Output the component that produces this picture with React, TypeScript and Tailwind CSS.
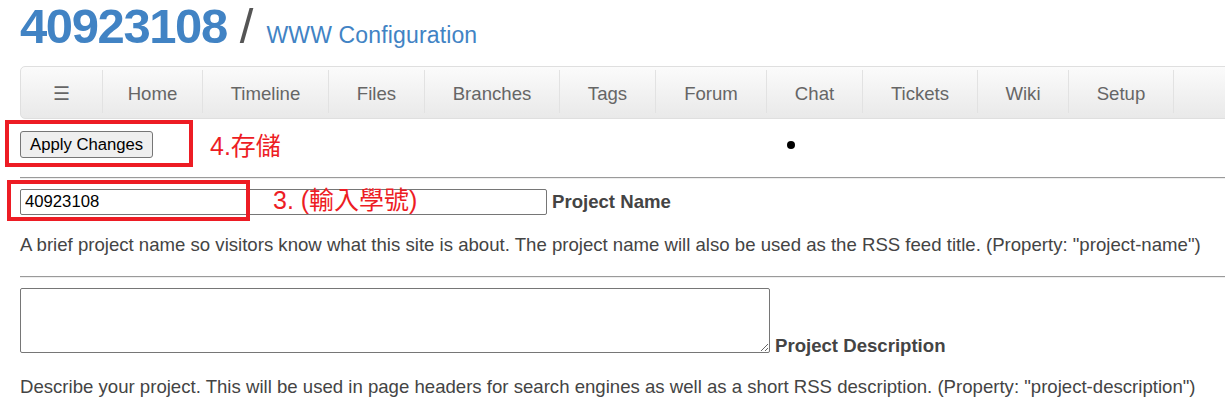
import React from "react";

const menu = [
  { label: "☰", w: "w-[82px]" },
  { label: "Home", w: "w-[100px]" },
  { label: "Timeline", w: "w-[126px]" },
  { label: "Files", w: "w-[96px]" },
  { label: "Branches", w: "w-[135px]" },
  { label: "Tags", w: "w-[96px]" },
  { label: "Forum", w: "w-[111px]" },
  { label: "Chat", w: "w-[96px]" },
  { label: "Tickets", w: "w-[115px]" },
  { label: "Wiki", w: "w-[91px]" },
  { label: "Setup", w: "w-[105px]" },
];

export default function App() {
  return (
    <div className="relative h-[413px] w-[1225px] overflow-hidden bg-white font-['Liberation_Sans',Arial,sans-serif] text-[#444]">
      <div className="flex w-[1280px] flex-col pl-[20px]">
        {/* title */}
        <div className="h-[66px] pt-[2px]">
          <h1 className="flex items-baseline leading-[49px]">
            <span className="text-[49px] font-bold tracking-[-1.4px] text-[#4183c4]">40923108</span>
            <span className="ml-[13px] text-[49px] text-[#555]">/</span>
            <span className="ml-[13px] text-[23px] tracking-[0.15px] text-[#4183c4]">WWW Configuration</span>
          </h1>
        </div>

        {/* main menu */}
        <nav className="flex h-[53px] rounded-l-[5px] border border-[#dfdfdf] bg-[linear-gradient(#fbfbfb,#e9e9e9)]">
          {menu.map((m) => (
            <a
              key={m.label}
              className={`${m.w} mt-[3px] mb-[5px] flex items-center justify-center border-r border-[#e2e2e2] pt-[4px] text-[18.6px] text-[#666]`}
            >
              {m.label}
            </a>
          ))}
        </nav>

        {/* apply */}
        <div className="mt-[12px] flex h-[27px]">
          <button className="h-[27px] rounded-[3px] border border-[#767676] bg-[#efefef] px-[9px] text-[16.7px] text-black">
            Apply Changes
          </button>
        </div>

        <hr className="mt-[19px] h-0 border-t border-b border-t-[#9a9a9a] border-b-[#eee]" />

        {/* project name */}
        <div className="mt-[10px] flex h-[26px] items-center gap-[5px]">
          <input
            readOnly
            value="40923108"
            className="h-[26px] w-[527px] rounded-[2px] border border-[#767676] px-[4px] text-[16.7px] text-black"
          />
          <b className="text-[18.6px] leading-none text-[#444]">Project Name</b>
        </div>
        <p className="mt-[18px] text-[18.6px] leading-[24px]">
          A brief project name so visitors know what this site is about. The project name will also be used as the RSS feed title. (Property: "project-name")
        </p>

        <hr className="mt-[19px] h-0 border-t border-b border-t-[#9a9a9a] border-b-[#eee]" />

        {/* project description */}
        <div className="mt-[10px] flex items-end gap-[5px]">
          <textarea className="h-[65px] w-[750px] rounded-[2px] border border-[#767676] text-[16.7px]" />
          <b className="mb-[-3px] text-[18.6px] leading-none text-[#444]">Project Description</b>
        </div>
        <p className="mt-[22px] text-[18.6px] leading-[24px]">
          Describe your project. This will be used in page headers for search engines as well as a short RSS description. (Property: "project-description")
        </p>
      </div>

      {/* stray dot */}
      <div className="absolute left-[787px] top-[141px] h-[8px] w-[8px] rounded-full bg-black" />

      {/* red annotations */}
      <div className="absolute left-[5px] top-[120px] h-[47px] w-[188px] border-[4px] border-[#ed1c24]" />
      <span className="absolute left-[210px] top-[129px] font-['Liberation_Sans','Noto_Sans_CJK_TC',sans-serif] text-[25px] leading-[34px] text-[#ed1c24]">
        4.存儲
      </span>
      <div className="absolute left-[7px] top-[180px] h-[41px] w-[243px] border-[4px] border-[#ed1c24]" />
      <span className="absolute left-[273px] top-[183px] font-['Liberation_Sans','Noto_Sans_CJK_TC',sans-serif] text-[25px] leading-[34px] text-[#ed1c24]">
        3. (輸入學號)
      </span>
    </div>
  );
}
